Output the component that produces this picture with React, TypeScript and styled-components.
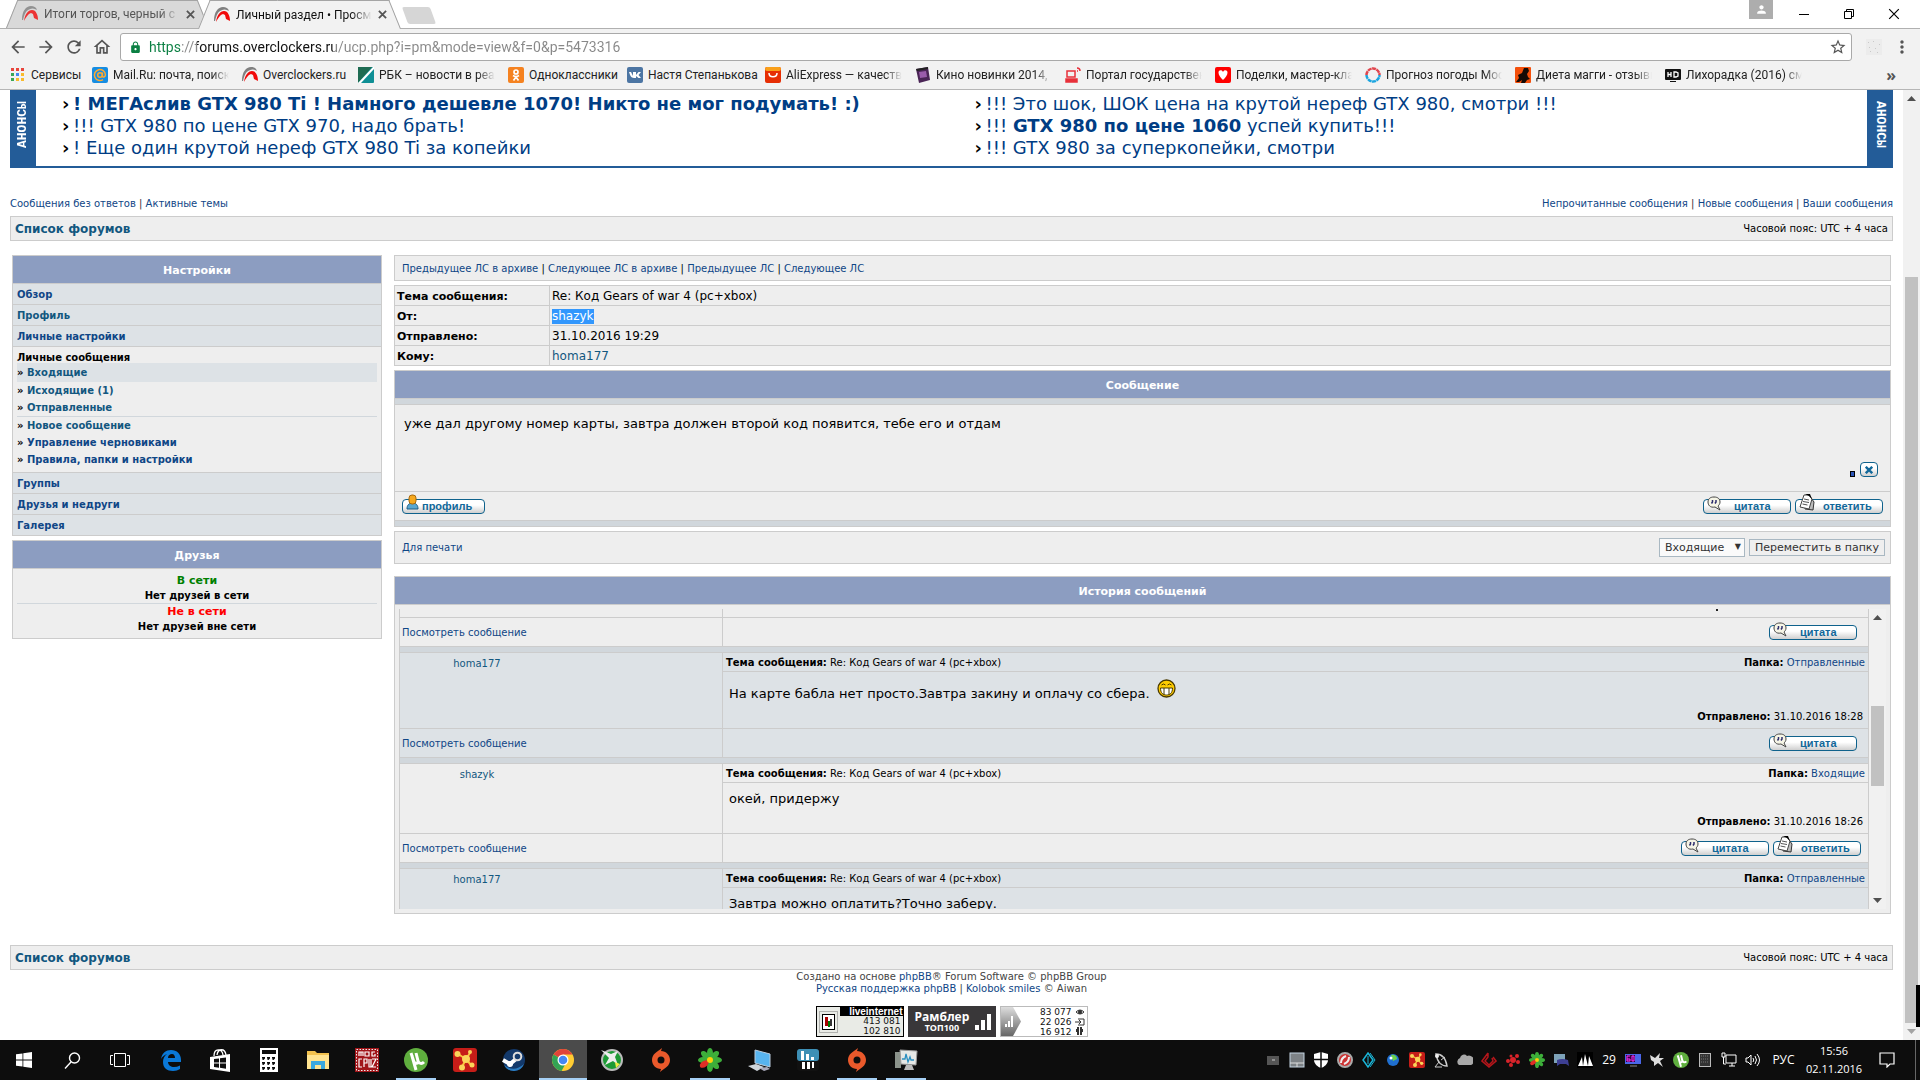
import React from "react";
import styled, { createGlobalStyle, css } from "styled-components";
import {
  MdArrowBack,
  MdArrowForward,
  MdRefresh,
  MdOutlineHome,
  MdStarBorder,
  MdMoreVert,
  MdLock,
  MdPerson,
} from "react-icons/md";

const verdana = `"DejaVu Sans", Verdana, sans-serif`;
const segoe = `"Open Sans", "Noto Sans", sans-serif`;
const chromeFont = `Roboto, "Open Sans", sans-serif`;
const line = "#cccccc";
const linkBlue = "#0f4686";
const linkTeal = "#12577f";
const row1 = "#eeeeee";
const row2 = "#dde2e6";
const spacer = "#d1d7dc";
const head = "#8c9dc1";

const GlobalStyle = createGlobalStyle`
  *, *::before, *::after { box-sizing: border-box; }
  html, body { margin: 0; background: #fff; overflow: hidden; }
  button, input, select { font: inherit; margin: 0; }
  button { cursor: pointer; }
  a { text-decoration: none; }
  svg { display: block; flex: none; }
`;

/* ---------- browser frame ---------- */

const Screen = styled.div`
  height: 100vh;
  display: flex;
  flex-direction: column;
  background: #fff;
  color: #000;
`;

const TabStrip = styled.div`
  height: 29px;
  flex: none;
  display: flex;
  padding-left: 6px;
  border-bottom: 1px solid #b0b0b0;
  font: 12px/28px ${chromeFont};
`;

const Tab = styled.button<{ $active?: boolean }>`
  position: relative;
  isolation: isolate;
  z-index: ${(p) => (p.$active ? 2 : 1)};
  width: 203px;
  height: ${(p) => (p.$active ? 29 : 28)}px;
  margin-right: -11px;
  padding: 0 14px 0 16px;
  border: 0;
  background: none;
  display: flex;
  align-items: center;
  gap: 6px;
  color: ${(p) => (p.$active ? "#111" : "#555")};
  &::before,
  &::after {
    content: "";
    position: absolute;
    z-index: -1;
    top: 0;
    bottom: 0;
    width: 55%;
    background: ${(p) => (p.$active ? "#f2f2f2" : "#d9d9d9")};
    border-top: 1px solid #a5a5a5;
  }
  &::before {
    left: 0;
    border-left: 1px solid #a0a0a0;
    transform: skewX(-22deg);
    transform-origin: bottom;
  }
  &::after {
    right: 0;
    border-right: 1px solid #a0a0a0;
    transform: skewX(22deg);
    transform-origin: bottom;
  }
`;

const fade = css`
  white-space: nowrap;
  mask-image: linear-gradient(to right, #000 85%, transparent);
`;

const TabTitle = styled.span`
  flex: 1;
  text-align: left;
  ${fade}
`;

const NewTab = styled.button`
  width: 28px;
  height: 17px;
  margin: 7px 0 0 15px;
  border: 0;
  border-radius: 2px;
  background: #d6d6d6;
  transform: skewX(20deg);
`;

const WindowButtons = styled.div`
  margin: 0 4px 0 auto;
  display: flex;
  align-items: flex-start;
`;

const UserBadge = styled.button`
  width: 24px;
  height: 19px;
  padding: 0;
  margin-right: 8px;
  border: 0;
  background: #adadad;
  color: #fff;
  display: grid;
  place-items: center;
`;

const WinButton = styled.button`
  width: 45px;
  height: 27px;
  padding: 0;
  border: 0;
  background: none;
  display: grid;
  place-items: center;
`;

const Toolbar = styled.div`
  height: 36px;
  flex: none;
  display: flex;
  align-items: center;
  padding: 0 4px;
  background: #f2f2f2;
`;

const ToolButton = styled.button`
  width: 28px;
  height: 28px;
  padding: 0;
  border: 0;
  background: none;
  color: #555;
  display: grid;
  place-items: center;
  font-size: 20px;
`;

const AddressBar = styled.label`
  flex: 1;
  min-width: 0;
  height: 28px;
  margin: 0 8px 0 4px;
  padding: 0 4px 0 8px;
  display: flex;
  align-items: center;
  gap: 7px;
  border: 1px solid #a9a9a9;
  border-radius: 3px;
  background: #fff;
  color: #0b8043;
`;

const Url = styled.input`
  flex: 1;
  min-width: 0;
  padding: 0;
  border: 0;
  outline: 0;
  font: 14px/20px ${chromeFont};
  color: #777;
  background: linear-gradient(to right, #0b8043 0 33px, #888 33px 48px, #111 48px 184px, #888 184px);
  -webkit-background-clip: text;
  background-clip: text;
  -webkit-text-fill-color: transparent;
`;

const Bookmarks = styled.nav`
  height: 25px;
  flex: none;
  display: flex;
  align-items: center;
  gap: 13px;
  padding: 0 24px 4px 10px;
  background: #f2f2f2;
  border-bottom: 1px solid #b6b6b6;
  font: 12px/20px ${chromeFont};
`;

const Bookmark = styled.a`
  display: flex;
  align-items: center;
  gap: 5px;
  color: #222;
`;

const BookmarkText = styled.span<{ $w: number; $cut?: boolean }>`
  width: ${(p) => p.$w}px;
  white-space: nowrap;
  ${(p) => p.$cut && fade}
`;

const More = styled.button`
  margin-left: auto;
  padding: 0;
  border: 0;
  background: none;
  color: #555;
  font: bold 16px/16px ${segoe};
`;

const View = styled.div`
  flex: 1;
  min-height: 0;
  display: flex;
`;

const Page = styled.main`
  flex: 1;
  min-width: 0;
  overflow: hidden;
  padding: 0 10px;
  font: 10px/12px ${verdana};
`;

const Scroll = styled.div<{ $w: number }>`
  width: ${(p) => p.$w}px;
  flex: none;
  display: flex;
  flex-direction: column;
  align-items: center;
  background: #f1f1f1;
`;

const ScrollArrow = styled.span<{ $down?: boolean; $dim?: boolean }>`
  width: 9px;
  height: 5px;
  margin: 6px 0;
  background: ${(p) => (p.$dim ? "#a3a3a3" : "#505050")};
  clip-path: ${(p) =>
    p.$down ? "polygon(0 0, 100% 0, 50% 100%)" : "polygon(50% 0, 100% 100%, 0 100%)"};
`;

const Gap = styled.span<{ $grow: number }>`
  flex: ${(p) => p.$grow} 0 0;
`;

const Thumb = styled.span<{ $grow: number }>`
  flex: ${(p) => p.$grow} 0 0;
  width: 13px;
  background: #c1c1c1;
`;

const EdgeMark = styled.span`
  position: fixed;
  right: 0;
  bottom: 53px;
  width: 4px;
  height: 42px;
  background: #000;
  z-index: 3;
`;

/* ---------- forum page ---------- */

const Announce = styled.section`
  display: flex;
  height: 78px;
  background: #fff;
`;

const AnnounceSide = styled.div<{ $flip?: boolean }>`
  width: 26px;
  flex: none;
  padding: ${(p) => (p.$flip ? "20px 0 0" : "11px 0 0")};
  background: #235c98;
  color: #fff;
  font: bold 13px/26px "Liberation Mono", monospace;
  writing-mode: vertical-rl;
  ${(p) => p.$flip && "transform: rotate(180deg);"}
`;

const AnnounceList = styled.ul`
  flex: 1;
  display: grid;
  grid-template-columns: 1fr 1fr;
  column-gap: 20px;
  align-content: start;
  margin: 0;
  padding: 3px 0 0 26px;
  border-bottom: 2px solid #235c98;
  list-style: none;
  font: 18px/22px ${verdana};
`;

const AnnounceItem = styled.li`
  display: flex;
  gap: 3px;
  white-space: nowrap;
  &::before {
    content: "›";
    width: 8px;
    font-weight: bold;
  }
  a {
    color: #003d84;
  }
`;

const QuickLinks = styled.div`
  display: flex;
  justify-content: space-between;
  padding: 30px 0 6px;
  color: #333;
`;

const A = styled.a<{ $teal?: boolean }>`
  color: ${(p) => (p.$teal ? linkTeal : linkBlue)};
`;

const Crumbs = styled.div`
  height: 25px;
  padding: 0 4px;
  display: flex;
  align-items: center;
  justify-content: space-between;
  border: 1px solid ${line};
  background: ${row1};
  strong {
    font-size: 12px;
  }
`;

const Columns = styled.div`
  display: grid;
  grid-template-columns: 370px minmax(0, 1fr);
  align-items: start;
  gap: 12px;
  margin: 14px 2px 31px;
`;

const Stack = styled.div`
  display: flex;
  flex-direction: column;
  gap: 4px;
`;

const Panel = styled.section`
  border: 1px solid ${line};
  background: ${row1};
`;

const PanelHead = styled.h2`
  margin: 0;
  padding-top: 2px;
  border-bottom: 1px solid ${line};
  background: ${head};
  color: #fff;
  text-align: center;
  font-size: 11px;
  line-height: 25px;
`;

const MenuList = styled.ul`
  margin: 0;
  padding: 0;
  list-style: none;
  font-weight: bold;
`;

const MenuItem = styled.li<{ $open?: boolean }>`
  padding: ${(p) => (p.$open ? "0 4px" : "2px 4px 0")};
  line-height: 18px;
  background: ${(p) => (p.$open ? row1 : row2)};
  & + & {
    border-top: 1px solid ${line};
  }
`;

const SubList = styled.ul`
  margin: 0;
  padding: 0 0 4px;
  list-style: none;
`;

const SubItem = styled.li<{ $current?: boolean; $rule?: boolean }>`
  line-height: 17px;
  ${(p) => p.$current && `background: ${row2}; line-height: 19px;`}
  ${(p) => p.$rule && `border-bottom: 1px solid ${spacer};`}
`;

const OpenTitle = styled.div`
  padding-top: 5px;
  line-height: 11px;
`;

const FriendsBody = styled.div`
  padding: 4px;
  text-align: center;
  font-weight: bold;
`;

const Status = styled.div<{ $color: string }>`
  font-size: 11px;
  line-height: 15px;
  color: ${(p) => p.$color};
`;

const StatusNote = styled.div<{ $rule?: boolean }>`
  line-height: 15px;
  ${(p) => p.$rule && `border-bottom: 1px solid ${spacer};`}
`;

const NavBox = styled(Panel)`
  padding: 2px 7px 0;
  line-height: 22px;
`;

const Details = styled.table`
  width: 100%;
  border-collapse: collapse;
  background: ${row1};
  th,
  td {
    height: 20px;
    padding: 2px 2px 0;
    border: 1px solid ${line};
    text-align: left;
    font-size: 12px;
    line-height: 15px;
  }
  th {
    width: 155px;
    font-size: 11px;
  }
`;

const Selected = styled.a`
  display: inline-block;
  background: #3297fd;
  color: #fff;
`;

const Strip = styled.div`
  height: 5px;
  background: ${spacer};
`;

const MessageEnd = styled(Strip)`
  height: 6px;
  border-top: 1px solid ${line};
`;

const MessageBody = styled.div`
  height: 88px;
  padding: 10px 12px 14px 9px;
  border: solid ${line};
  border-width: 1px 0;
  display: flex;
  flex-direction: column;
  justify-content: space-between;
  font-size: 13px;
  line-height: 18px;
`;

const PostTools = styled.div`
  display: flex;
  justify-content: flex-end;
  align-items: flex-end;
  gap: 5px;
`;

const Dot = styled.span`
  width: 5px;
  height: 6px;
  border: 1px solid #000;
  background: #2b55b8;
`;

const buttonSkin = css`
  padding: 0;
  border: 1px solid #0f628c;
  border-radius: 4px;
  background: linear-gradient(#fff 40%, #cfcfcf);
  color: #11689a;
`;

const CloseButton = styled.button`
  ${buttonSkin}
  width: 18px;
  height: 15px;
  display: grid;
  place-items: center;
`;

const ImageButton = styled.button<{ $w: number; $pad: number }>`
  ${buttonSkin}
  position: relative;
  width: ${(p) => p.$w}px;
  height: 15px;
  padding-left: ${(p) => p.$pad}px;
  text-align: left;
  font: bold 11px/12px "Liberation Sans", Arial, sans-serif;
  svg {
    position: absolute;
    left: 3px;
    bottom: 2px;
  }
`;

const ButtonRow = styled.div`
  height: 28px;
  display: flex;
  align-items: center;
  justify-content: space-between;
  padding: 0 7px;
`;

const ButtonGroup = styled.div`
  display: flex;
  gap: 4px;
`;

const PrintBox = styled(Panel)`
  height: 33px;
  margin-bottom: 8px;
  padding: 0 5px 0 7px;
  display: flex;
  align-items: center;
  justify-content: space-between;
`;

const MoveForm = styled.form`
  display: flex;
  align-items: center;
  gap: 4px;
  font-size: 11px;
`;

const FolderSelect = styled.label`
  position: relative;
  &::after {
    content: "▼";
    position: absolute;
    right: 4px;
    top: 4px;
    font-size: 8px;
    line-height: 9px;
    color: #333;
    pointer-events: none;
  }
  select {
    appearance: none;
    width: 86px;
    height: 19px;
    padding: 0 5px;
    border: 1px solid #a9b8c2;
    border-radius: 0;
    background: #fafafa;
    color: #333;
  }
`;

const MoveButton = styled.button`
  height: 17px;
  padding: 0 5px;
  border: 1px solid #a9b8c2;
  background: #efefef;
  color: #333;
  line-height: 15px;
`;

const HistoryBox = styled.div`
  height: 308px;
  padding: 4px;
  display: flex;
`;

const HistoryView = styled.div`
  flex: 1;
  min-width: 0;
  overflow: hidden;
`;

const History = styled.table`
  width: 100%;
  border-spacing: 0;
  border-left: 1px solid ${line};
  table-layout: fixed;
  td {
    padding: 0;
    border: solid ${line};
    border-width: 0 1px 1px 0;
    vertical-align: top;
  }
`;

const NameCol = styled.col`
  width: 323px;
`;

const HistoryRow = styled.tr<{ $alt?: boolean }>`
  background: ${(p) => (p.$alt ? row2 : row1)};
`;

const Tail = styled.div`
  height: 8px;
  display: flex;
  justify-content: flex-end;
  padding-right: 150px;
`;

const Speck = styled.span`
  width: 2px;
  height: 2px;
  background: #222;
`;

const User = styled.div`
  width: 154px;
  padding-top: 5px;
  text-align: center;
`;

const Subject = styled.div`
  display: flex;
  justify-content: space-between;
  padding: 2px 3px 0;
  line-height: 16px;
  border-bottom: 1px solid ${line};
`;

const HistoryText = styled.div`
  padding: 5px 6px 3px;
  font-size: 13px;
  line-height: 22px;
`;

const SmileText = styled.div`
  display: flex;
  align-items: flex-start;
  gap: 7px;
  padding: 7px 6px 0;
  font-size: 13px;
  line-height: 29px;
`;

const Sent = styled.div`
  padding: 3px 5px 5px;
  text-align: right;
`;

const FootLink = styled.div`
  padding: 2px 0 0 2px;
  line-height: 26px;
`;

const HistoryButtons = styled.div<{ $pad: number }>`
  height: 28px;
  display: flex;
  align-items: center;
  justify-content: flex-end;
  gap: 4px;
  padding-right: ${(p) => p.$pad}px;
`;

const Credits = styled.footer`
  padding-top: 1px;
  text-align: center;
  color: #444;
`;

const Counters = styled.div`
  display: flex;
  justify-content: center;
  gap: 4px;
  padding-top: 11px;
`;

const Counter = styled.a<{ $kind: "live" | "rambler" | "stat" }>`
  width: 88px;
  height: 31px;
  display: flex;
  align-items: center;
  color: #111;
  ${(p) => p.$kind === "live" && "border: 1px solid #000; background: #e9ebe6;"}
  ${(p) =>
    p.$kind === "rambler" &&
    "background: #393739; color: #fff; padding: 0 5px 0 7px; justify-content: space-between;"}
  ${(p) => p.$kind === "stat" && "border: 1px solid #bbb; background: #fff;"}
`;

const LiveText = styled.span`
  flex: 1;
  align-self: stretch;
  display: flex;
  flex-direction: column;
  text-align: right;
  font: 9px/10px ${verdana};
  b {
    background: #000;
    color: #fff;
    font: bold 10px/9px "Liberation Sans", sans-serif;
  }
`;

const LiveNumber = styled.span`
  padding-right: 2px;
`;

const RamblerText = styled.span`
  font: bold 12px/12px ${segoe};
  small {
    display: block;
    font-size: 9px;
    line-height: 10px;
  }
`;

const StatText = styled.span`
  flex: 1;
  text-align: right;
  padding-right: 3px;
  font: 9px/10px ${verdana};
`;

/* ---------- task bar ---------- */

const TaskBar = styled.footer`
  height: 40px;
  flex: none;
  display: flex;
  background: #0d0d0d;
  color: #fff;
  font: 12px/18px ${segoe};
`;

const TaskGroup = styled.div<{ $apps?: boolean }>`
  display: flex;
  ${(p) => p.$apps && "gap: 1px; margin-left: 3px;"}
`;

const TaskButton = styled.button<{ $state?: "running" | "active" }>`
  width: 48px;
  height: 40px;
  padding: 0;
  border: 0;
  color: #fff;
  display: grid;
  place-items: center;
  background: ${(p) =>
    p.$state === "active"
      ? "linear-gradient(#4b4b4b 0 38px, #a6d0f5 38px)"
      : p.$state === "running"
        ? "linear-gradient(#a6d0f5, #a6d0f5) center bottom / 40px 2px no-repeat"
        : "none"};
`;

const Tray = styled.div`
  display: flex;
  align-items: center;
  margin-left: auto;
`;

const TrayItem = styled.button`
  width: 24px;
  height: 40px;
  padding: 0;
  border: 0;
  background: none;
  color: #fff;
  display: grid;
  place-items: center;
`;

const Lang = styled.button`
  width: 37px;
  padding: 0;
  border: 0;
  background: none;
  color: #fff;
`;

const Clock = styled.time`
  width: 64px;
  text-align: center;
  font-size: 11px;
`;

const NoteButton = styled(TrayItem)`
  width: 42px;
`;

const ShowDesktop = styled.button`
  width: 5px;
  height: 40px;
  margin-left: 7px;
  padding: 0;
  border: 0;
  border-left: 1px solid #666;
  background: none;
`;

/* ---------- drawings ---------- */

const OcIcon = ({ dim }: { dim?: boolean }) => (
  <svg width="16" height="16" viewBox="0 0 16 16" opacity={dim ? 0.8 : 1}>
    <path d="M0 14C0 5 4 0 9 0c3 0 5 1 6 4C12 2 9 2 6 4 3 6 2 10 1 14z" fill="#808080" />
    <path d="M2 15C3 8 6 4 10 4c4 0 6 5 6 10l-4-2-1-4-2-1c-3 1-5 4-7 8z" fill="#f10a0a" />
  </svg>
);

const CloseX = ({ size = 9, color = "#555", w = 2 }: { size?: number; color?: string; w?: number }) => (
  <svg width={size} height={size} viewBox="0 0 10 10" stroke={color} strokeWidth={w}>
    <path d="M1 1l8 8M9 1L1 9" />
  </svg>
);

const Sq = ({ bg, children, r = 1 }: { bg: string; children?: React.ReactNode; r?: number }) => (
  <svg width="16" height="16" viewBox="0 0 16 16">
    <rect width="16" height="16" rx={r} fill={bg} />
    {children}
  </svg>
);

const AppsIcon = () => (
  <svg width="16" height="16" viewBox="0 0 16 16">
    {["#e8453c", "#e8453c", "#e8453c", "#3aa757", "#4688f1", "#f9bb2d", "#3aa757", "#f9bb2d", "#f9bb2d"].map((c, i) => (
      <rect key={i} x={1 + (i % 3) * 5} y={1 + Math.floor(i / 3) * 5} width="3" height="3" fill={c} />
    ))}
  </svg>
);

const MailIcon = () => (
  <Sq bg="#168de2" r={2}>
    <g fill="none" stroke="#ffa930" strokeWidth="1.5">
      <circle cx="8" cy="8" r="2.3" />
      <path d="M10.4 5.6v3.2c0 2 3 1.500 3-1A5.500 5.500 0 1 0 11 12.600" />
    </g>
  </Sq>
);

const RbkIcon = () => (
  <Sq bg="#0f8f95">
    <path d="M0 16V0h14z" fill="#1e6b52" />
    <path d="M0 16L15 0h1v2L3 16z" fill="#fff" />
  </Sq>
);

const OkIcon = () => (
  <Sq bg="#f58220" r={2}>
    <g fill="none" stroke="#fff" strokeWidth="1.700">
      <circle cx="8" cy="5" r="2" />
      <path d="M5 8.500q3 2 6 0M8 10l-2.500 3.500M8 10l2.500 3.500" />
    </g>
  </Sq>
);

const VkIcon = () => (
  <Sq bg="#4c75a3" r={2}>
    <path d="M2 5h2l2 4V5h3v3l2.500-3H14l-2.500 3 2.500 3h-2.500L9 9v2H7C4 11 3 8 2 5z" fill="#fff" />
  </Sq>
);

const AliIcon = () => (
  <Sq bg="#e62e04" r={2}>
    <rect width="16" height="4" rx="2" fill="#f9a01b" />
    <path d="M4 6c0 5 8 5 8 0" fill="none" stroke="#fff" strokeWidth="1.500" />
  </Sq>
);

const FilmIcon = () => (
  <svg width="16" height="16" viewBox="0 0 16 16">
    <path d="M1 2l12-2 2 13-11 3z" fill="#4a2556" />
    <path d="M4 5l7-1 1 6-7 1z" fill="#9a5cab" />
    <path d="M1 2l12-2v2L2 4z" fill="#222" />
  </svg>
);

const PortalIcon = () => (
  <svg width="16" height="16" viewBox="0 0 16 16" fill="none" stroke="#e8303a" strokeWidth="1.500">
    <rect x="2" y="4" width="8" height="6" />
    <path d="M1 12h11v3H1z" fill="#e8303a" />
    <path d="M12 1q3 0 3 3M12 4h1" />
  </svg>
);

const HeartIcon = () => (
  <Sq bg="#f00" r={2}>
    <path d="M8 13C5 10 3.500 8 3.500 5.500S7 2.500 8 5c1-2.500 4.500-2 4.500.5S11 10 8 13z" fill="#fff" />
  </Sq>
);

const RingIcon = () => (
  <svg width="16" height="16" viewBox="0 0 16 16" fill="none" strokeWidth="2.500">
    <path d="M1.500 8a6.500 6.500 0 0 1 13 0" stroke="#e0454d" strokeDasharray="4 .5" />
    <path d="M1.500 8a6.500 6.500 0 0 0 13 0" stroke="#1ba5e0" strokeDasharray="4 .5" />
  </svg>
);

const DietIcon = () => (
  <Sq bg="#f4500c">
    <path d="M9 1l4 0 1 3-2 3 1 3 2 2-3 1-2 3H6l1-3-3 2H1l3-4-1-3 4-2z" fill="#150a05" />
  </Sq>
);

const HdIcon = () => (
  <svg width="16" height="16" viewBox="0 0 16 16">
    <rect y="2" width="16" height="11" rx="1" fill="#111" />
    <path d="M5 14h6v1H5z" fill="#111" />
    <path d="M3 5v5M6 5v5M3 7.500h3M9 5v5h2l2-1V6l-2-1z" stroke="#fff" fill="none" strokeWidth="1.300" />
  </svg>
);

const QuoteIcon = () => (
  <svg width="16" height="15" viewBox="0 0 16 15">
    <path d="M7 1c4 0 6 2 6 5 0 2-1 3-2 4l2 4-5-3C3 12 1 9 1 6s2-5 6-5z" fill="#f6f5e6" stroke="#444" />
    <path d="M5.500 4v2l-1 1.500M9 4v2L8 7.500" stroke="#2d2d6d" strokeWidth="1.500" fill="none" />
  </svg>
);

const ReplyIcon = () => (
  <svg width="16" height="17" viewBox="0 0 16 17">
    <path d="M8 3l4 1 3 4-1 8-8-1z" fill="#bbb" stroke="#333" />
    <path d="M5 1h5l3 4-3 10-9-2z" fill="#fff" stroke="#444" />
    <path d="M6 0h5l2 5-3-3z" fill="#000" />
    <path d="M5 5l5 1M4 7.500l6 1M3.500 10l5 1" stroke="#555" />
  </svg>
);

const ProfileIcon = () => (
  <svg width="13" height="17" viewBox="0 0 13 17">
    <path d="M1 15c0-4 2-6 5.500-6S12 11 12 15z" fill="#5aa7d0" stroke="#1d5c85" />
    <rect x="3" y="1" width="7" height="9" rx="3" fill="#f6a91f" stroke="#a86a0d" />
  </svg>
);

const SmileIcon = () => (
  <svg width="19" height="19" viewBox="0 0 19 19">
    <circle cx="9.500" cy="9.500" r="8.500" fill="#fc0" stroke="#4a3a00" strokeWidth="1.300" />
    <path d="M3.500 9h12c0 5-2.500 7-6 7s-6-2-6-7z" fill="#fff" stroke="#4a3a00" />
    <path d="M7 9v6.500M12 9v6.500" stroke="#4a3a00" />
    <path d="M4.500 6q2-2 4 0M10.500 6q2-2 4 0" fill="none" stroke="#4a3a00" />
  </svg>
);

const LiveIcon = () => (
  <svg width="23" height="29" viewBox="0 0 23 29">
    <rect x="2.500" y="4.500" width="18" height="21" fill="none" stroke="#777" strokeDasharray="1 1" />
    <rect x="5.500" y="7.500" width="12" height="15" fill="#fff" stroke="#000" />
    <path d="M8 10h3v9H8z" fill="#a00" />
    <path d="M11 14h2v6h-2z" fill="#070" />
    <path d="M13 12h2v7h-2z" fill="#333" />
  </svg>
);

const BarsIcon = () => (
  <svg width="16" height="16" viewBox="0 0 16 16" fill="#fff">
    <path d="M0 11h4v5H0zM6 6h4v10H6zM12 0h4v16h-4z" />
  </svg>
);

const StatArrow = () => (
  <svg width="20" height="29" viewBox="0 0 20 29">
    <defs>
      <linearGradient id="sg" x2="0" y2="1">
        <stop stopColor="#ddd" />
        <stop offset="1" stopColor="#666" />
      </linearGradient>
    </defs>
    <path d="M0 0h12l8 14.500L12 29H0z" fill="url(#sg)" />
    <path d="M4 17h2v3H4zM7 14h2v6H7zM10 9h2v11h-2z" fill="#fff" />
  </svg>
);

const StatIcons = () => (
  <svg width="12" height="29" viewBox="0 0 12 29" fill="none" stroke="#333">
    <path d="M1 5q4-4 8 0-4 4-8 0z" />
    <circle cx="5" cy="5" r="1.500" fill="#333" />
    <path d="M3 12h6v6H3M0 15h6M4 13l2 2-2 2" />
    <path d="M3 20v8M6 20v8M2 22v3M7 22v3" strokeWidth="2" />
  </svg>
);

const I = ({ children, s = 24, v = 24 }: { children: React.ReactNode; s?: number; v?: number }) => (
  <svg width={s} height={s} viewBox={`0 0 ${v} ${v}`}>
    {children}
  </svg>
);

const WindowsIcon = () => (
  <I s={16} v={16}>
    <path d="M0 2.300L6.500 1.400V7.600H0zM7.300 1.300L16 0v7.600H7.300zM0 8.400h6.500v6.200L0 13.700zM7.300 8.400H16V16l-8.700-1.300z" fill="#fff" />
  </I>
);
const SearchIcon = () => (
  <I s={17} v={17}>
    <g fill="none" stroke="#fff" strokeWidth="1.400">
      <circle cx="10.500" cy="6" r="5" />
      <path d="M7 10l-6 6.500" />
    </g>
  </I>
);
const TaskViewIcon = () => (
  <I s={20} v={20}>
    <path d="M4.500 3.500h11v13h-11zM3 5.500H.5v9H3M17 5.500h2.500v9H17" fill="none" stroke="#fff" />
  </I>
);
const EdgeIcon = () => (
  <I s={22} v={22}>
    <path d="M1 10C2 4 6 1 11 1c6 0 10 4 10 10v2H8c0 3 3 5 6 5 2 0 4-.5 6-1.500V20c-2 1-4 2-7 2-6 0-10-3-10-9 0-3 1-6 4-8-3 1-5 3-6 5zm7-1h7c0-2-1-4-3-4S8 6 8 9z" fill="#0a78d7" />
  </I>
);
const StoreIcon = () => (
  <I>
    <path d="M2 9l20-3v18L2 21z" fill="#fff" />
    <path d="M6 8c0-8 8-8 9-1M9 7c1-7 8-7 9 0" fill="none" stroke="#fff" strokeWidth="1.300" />
    <path d="M6 11l5-.6v4.200H6zM12 10.300l6-.8v5.100h-6zM6 15.500h5v4.200l-5-.6zM12 15.500h6v5.200l-6-.9z" fill="#0d0d0d" />
  </I>
);
const CalcIcon = () => (
  <I>
    <rect x="3" width="18" height="24" fill="#fff" />
    <rect x="5" y="2" width="14" height="4" fill="#0d0d0d" />
    {[9, 14, 19].map((y) => [5, 10, 15].map((x) => <path key={`${x}${y}`} d={`M${x} ${y}h3v1.500l-1.500 1.500h-1v-1.500H${x}z`} fill="#0d0d0d" />))}
  </I>
);
const FolderIcon = () => (
  <I>
    <path d="M1 3h8l2 2h12v16H1z" fill="#f2c14e" />
    <path d="M1 7h22v14H1z" fill="#ffe390" />
    <path d="M5 21v-8h14v8h-4v-4H9v4z" fill="#3aa8df" />
  </I>
);
const CpuIcon = () => (
  <I>
    <rect width="24" height="24" fill="#a11519" />
    <rect x="1.500" y="1.500" width="21" height="21" fill="none" stroke="#eee" strokeDasharray="1.500 1.500" />
    <path d="M4 8V4h4v4M6 4v4M10 4h4v4h-4zM20 4h-3v4h3V6M7 11H4v8h3M9 19v-8h3v4H9M14 11v8h2v-8M17 11h4l-4 8h4" fill="none" stroke="#fff" strokeWidth="1.200" />
  </I>
);
const UTorrent = ({ s = 24 }: { s?: number }) => (
  <I s={s}>
    <circle cx="12" cy="12" r="12" fill="#5fae3e" />
    <path d="M7 5l3 9c1 2 4 2 4-1l-2-8M14 13c1 3 4 3 6 1M8 8l4 14" fill="none" stroke="#fff" strokeWidth="3" />
  </I>
);
const NodesIcon = ({ s = 24 }: { s?: number }) => (
  <I s={s}>
    <rect width="24" height="24" rx="3" fill="#c61d18" />
    <path d="M13 11L5 6M13 11l4-6M13 11l5 6M13 11l-4 8" stroke="#f8c33a" strokeWidth="2" />
    <g fill="#fbd45a">
      <circle cx="13" cy="11" r="4" />
      <circle cx="4.500" cy="6" r="3" />
      <circle cx="17" cy="4" r="2" />
      <circle cx="19" cy="17" r="2.500" />
      <circle cx="9" cy="19.500" r="3" />
    </g>
  </I>
);
const SteamIcon = () => (
  <I>
    <circle cx="12" cy="12" r="11" fill="#13396b" />
    <path d="M2 17q10 8 20-1a11 11 0 0 1-20 1z" fill="#2b7cc0" />
    <path d="M1 12l7 4 6-5" fill="none" stroke="#fff" strokeWidth="4" />
    <circle cx="15.500" cy="8.500" r="3.800" fill="#13396b" stroke="#ddd" strokeWidth="2" />
    <circle cx="8" cy="16" r="3" fill="#fff" />
  </I>
);
const ChromeIcon = () => (
  <I>
    <circle cx="12" cy="12" r="11" fill="#fc3" />
    <path d="M12 12L2.500 6.500A11 11 0 0 1 21.500 6.500H12z" fill="#e0443a" />
    <path d="M2.500 6.500a11 11 0 0 0 8 16.400L15 15l-3-3z" fill="#33a354" />
    <circle cx="12" cy="12" r="5.500" fill="#fff" />
    <circle cx="12" cy="12" r="4.300" fill="#4587f3" />
  </I>
);
const BurnIcon = () => (
  <I>
    <circle cx="12" cy="12" r="10" fill="#1d9a35" stroke="#bbb" strokeWidth="2" />
    <path d="M1 2l10 4 7-3-3 6 3 8-5-4-8 4 4-7z" fill="#eee" />
    <path d="M15 14l5 2-4 4z" fill="#ee4" />
  </I>
);
const OriginIcon = () => (
  <I>
    <path d="M12 3c5 0 9 4 9 9 0 6-5 8-10 12l1-3c-5 0-9-4-9-9C3 6 8 4 13 0z" fill="#e9592b" />
    <circle cx="12" cy="12" r="3.500" fill="#0d0d0d" />
  </I>
);
const IcqIcon = ({ s = 24 }: { s?: number }) => (
  <I s={s}>
    {[0, 45, 90, 135, 180, 270, 315].map((a) => (
      <ellipse key={a} cx="12" cy="5" rx="3" ry="5" fill="#3dae3a" transform={`rotate(${a} 12 12)`} />
    ))}
    <ellipse cx="12" cy="5" rx="3" ry="5" fill="#e02e26" transform="rotate(235 12 12)" />
    <circle cx="12" cy="12" r="3" fill="#fcd20a" />
  </I>
);
const LaptopIcon = () => (
  <I>
    <path d="M8 2l15 4v13L8 15z" fill="#58b4ef" stroke="#bcd" />
    <path d="M1 18l8-2 8 3-7 4z" fill="#cfd6dc" />
    <path d="M12 20l8-1 3 2-6 2z" fill="#aab" />
  </I>
);
const GaugeIcon = () => (
  <I>
    <rect x="1" y="1" width="22" height="22" rx="3" fill="#111" />
    <rect x="1" y="1" width="22" height="12" rx="3" fill="#3d8fb5" />
    <path d="M5 3h3v9H5zM10 6h3v6h-3zM15 9h3v3h-3zM6 14h3v7H6zM11 14h3v7h-3zM16 14h2v6h-2z" fill="#fff" />
  </I>
);
const MonitorIcon = () => (
  <I>
    <path d="M1 4h6v16H1z" fill="#8b938b" />
    <path d="M6 2l17 1-1 14-15-1z" fill="#e6e8e6" stroke="#999" />
    <path d="M8 11h3l1-5 2 8 2-5 1 3h3" fill="none" stroke="#2b8fc0" strokeWidth="1.300" />
    <path d="M12 17h6l2 5H10z" fill="#bbb" />
  </I>
);

const apps: { name: string; icon: React.ReactNode; state?: "running" | "active" }[] = [
  { name: "Edge", icon: <EdgeIcon /> },
  { name: "Store", icon: <StoreIcon /> },
  { name: "Calculator", icon: <CalcIcon /> },
  { name: "Explorer", icon: <FolderIcon /> },
  { name: "CPU-Z", icon: <CpuIcon /> },
  { name: "uTorrent", icon: <UTorrent />, state: "running" },
  { name: "Nodes", icon: <NodesIcon /> },
  { name: "Steam", icon: <SteamIcon /> },
  { name: "Chrome", icon: <ChromeIcon />, state: "active" },
  { name: "Afterburner", icon: <BurnIcon /> },
  { name: "Origin", icon: <OriginIcon /> },
  { name: "ICQ", icon: <IcqIcon />, state: "running" },
  { name: "Remote", icon: <LaptopIcon /> },
  { name: "Gauge", icon: <GaugeIcon /> },
  { name: "Origin client", icon: <OriginIcon />, state: "running" },
  { name: "Monitor", icon: <MonitorIcon />, state: "running" },
];

const T = ({ children }: { children: React.ReactNode }) => <I s={16} v={16}>{children}</I>;

const tray: React.ReactNode[] = [
  <T><rect x="2" y="4" width="12" height="9" fill="#555" /><path d="M7 8h3" stroke="#ccc" /></T>,
  <T><rect x="1" y="1" width="14" height="14" fill="#7d8286" stroke="#c4d4e2" /><path d="M1 11h14M8 11v4" stroke="#ddd" /></T>,
  <T><path d="M8 0l7 2v6c0 4-4 7-7 8-3-1-7-4-7-8V2z" fill="#fff" /><path d="M8 0v16M1 7.500h14" stroke="#0d0d0d" strokeWidth="1.500" /></T>,
  <T><circle cx="8" cy="8" r="7" fill="#c33" stroke="#aaa" strokeWidth="2" /><path d="M4 11q0-5 5-7M7 12q5-2 5-7" stroke="#eee" strokeWidth="2" fill="none" /></T>,
  <T><path d="M7 1l5 7-5 7-5-7z" fill="none" stroke="#1bb6d8" strokeWidth="1.500" /><path d="M9 1l5 7-5 7M7 4v8" stroke="#1bb6d8" fill="none" /></T>,
  <T><circle cx="8" cy="8" r="6" fill="#1f6fd0" /><path d="M6 3c4-1 6 2 6 4L8 9z" fill="#6bd04a" /><circle cx="6" cy="6" r="1.500" fill="#fff" /></T>,
  <NodesIcon s={16} />,
  <T><path d="M3 2q9 0 11 12-9 0-11-12z" fill="none" stroke="#ccc" strokeWidth="1.500" /><path d="M6 10l-4 5h7M8 8l4-3" stroke="#ccc" fill="none" /><circle cx="4" cy="4" r="2" fill="#eee" /></T>,
  <T><path d="M2 13a4 4 0 0 1 1-7 4 4 0 0 1 7-2 4 4 0 0 1 4 9z" fill="#a9a9a9" /></T>,
  <T><path d="M7 1v4L4 9l4 4 4-4-1-3M7 1L1 9l7 6 7-6-3-4" fill="none" stroke="#b5161b" strokeWidth="1.500" /></T>,
  <T><g fill="#d8232a"><circle cx="8" cy="8" r="3" /><circle cx="3" cy="9" r="2" /><circle cx="12" cy="4" r="2" /><circle cx="13" cy="10" r="2" /><circle cx="6" cy="13" r="2" /><circle cx="6" cy="4" r="1.500" /></g></T>,
  <IcqIcon s={16} />,
  <T><path d="M1 2h11v9H1z" fill="#7da2b8" /><path d="M4 8q5-2 11 0l1 6-3-2H7l-3 2z" fill="#3d3f93" /></T>,
  <T><rect width="16" height="16" fill="#000" /><path d="M1 14L5 5l1 9zM6 14L8 2l3 12zM11 14L12 4l4 10z" fill="#fff" /></T>,
  "29",
  <T><rect x="0" y="2" width="16" height="10" fill="#4a66e8" /><rect x="1" y="3" width="9" height="7" fill="#3a0040" /><path d="M2 4h3M2 4v5h3V7H2M7 4h2v5H7z" stroke="#f3f" fill="none" /><path d="M5 14h7" stroke="#888" /></T>,
  <T><path d="M1 3l5 3 5-5-1 5 5 0-4 3 3 6-5-4-4 3 0-4L2 8z" fill="#ddd" /></T>,
  <UTorrent s={16} />,
  <T><rect x="2.500" y="1.500" width="11" height="13" fill="#333" stroke="#bbb" /><path d="M4 4h8M4 7h8M4 10h8" stroke="#777" strokeDasharray="1 1" /></T>,
  <T><path d="M5 3h10v8H5zM8 14h6M11 11v3M1 1h3v4H1zM2.500 5v7H5" fill="none" stroke="#fff" /></T>,
  <T><path d="M1 6h2l3-3v10l-3-3H1z" fill="none" stroke="#fff" /><path d="M8 6q1.500 2 0 4M10 4q3 4 0 8M12 2q5 6 0 12" fill="none" stroke="#fff" /></T>,
];

const bookmarks: { t: string; w: number; cut?: boolean; icon: React.ReactNode }[] = [
  { t: "Сервисы", w: 48, icon: <AppsIcon /> },
  { t: "Mail.Ru: почта, поиск", w: 116, cut: true, icon: <MailIcon /> },
  { t: "Overclockers.ru", w: 82, icon: <OcIcon /> },
  { t: "РБК – новости в реал", w: 116, cut: true, icon: <RbkIcon /> },
  { t: "Одноклассники", w: 85, icon: <OkIcon /> },
  { t: "Настя Степанькова", w: 104, icon: <VkIcon /> },
  { t: "AliExpress — качестве", w: 116, cut: true, icon: <AliIcon /> },
  { t: "Кино новинки 2014,", w: 116, cut: true, icon: <FilmIcon /> },
  { t: "Портал государствен", w: 116, cut: true, icon: <PortalIcon /> },
  { t: "Поделки, мастер-кла", w: 116, cut: true, icon: <HeartIcon /> },
  { t: "Прогноз погоды Мос", w: 116, cut: true, icon: <RingIcon /> },
  { t: "Диета магги - отзывь", w: 116, cut: true, icon: <DietIcon /> },
  { t: "Лихорадка (2016) смо", w: 116, cut: true, icon: <HdIcon /> },
];

const Quote = () => (
  <ImageButton type="button" $w={88} $pad={30}>
    <QuoteIcon />
    цитата
  </ImageButton>
);

const Reply = () => (
  <ImageButton type="button" $w={88} $pad={27}>
    <ReplyIcon />
    ответить
  </ImageButton>
);

const FootRow = ({ alt, reply }: { alt?: boolean; reply?: boolean }) => (
  <>
    <HistoryRow $alt={alt}>
      <td>
        <FootLink>
          <A href="#">Посмотреть сообщение</A>
        </FootLink>
      </td>
      <td>
        <HistoryButtons $pad={reply ? 7 : 11}>
          <Quote />
          {reply && <Reply />}
        </HistoryButtons>
      </td>
    </HistoryRow>
    <tr>
      <td colSpan={2}>
        <Strip />
      </td>
    </tr>
  </>
);

const PostRow = (p: { alt?: boolean; user: string; folder: string; text: string; smile?: boolean; sent?: string }) => (
  <HistoryRow $alt={p.alt}>
    <td>
      <User>
        <A $teal href="#">
          {p.user}
        </A>
      </User>
    </td>
    <td>
      <Subject>
        <span>
          <b>Тема сообщения:</b> Re: Код Gears of war 4 (pc+xbox)
        </span>
        <span>
          <b>Папка:</b> <A href="#">{p.folder}</A>
        </span>
      </Subject>
      {p.smile ? (
        <SmileText>
          {p.text}
          <SmileIcon />
        </SmileText>
      ) : (
        <HistoryText>{p.text}</HistoryText>
      )}
      {p.sent && (
        <Sent>
          <b>Отправлено:</b> {p.sent}
        </Sent>
      )}
    </td>
  </HistoryRow>
);

const CrumbBar = () => (
  <Crumbs>
    <strong>
      <A $teal href="#">
        Список форумов
      </A>
    </strong>
    <span>Часовой пояс: UTC + 4 часа</span>
  </Crumbs>
);

const PageScroll = () => (
  <Scroll $w={17} aria-hidden>
    <ScrollArrow />
    <Gap $grow={170} />
    <Thumb $grow={746} />
    <ScrollArrow $down $dim />
  </Scroll>
);

export default function App() {
  return (
    <Screen>
      <GlobalStyle />
      <TabStrip>
        <Tab type="button">
          <OcIcon dim />
          <TabTitle>Итоги торгов, черный с</TabTitle>
          <CloseX />
        </Tab>
        <Tab type="button" $active>
          <OcIcon />
          <TabTitle>Личный раздел • Просм</TabTitle>
          <CloseX />
        </Tab>
        <NewTab type="button" aria-label="Новая вкладка" />
        <WindowButtons>
          <UserBadge type="button" aria-label="Пользователь">
            <MdPerson size={13} />
          </UserBadge>
          <WinButton type="button" aria-label="Свернуть">
            <svg width="10" height="10" stroke="#000"><path d="M0 5.500h10" /></svg>
          </WinButton>
          <WinButton type="button" aria-label="Восстановить">
            <svg width="10" height="10" stroke="#000" fill="none"><path d="M.5 2.500h7v7h-7zM2.500 2.500v-2h7v7h-2" /></svg>
          </WinButton>
          <WinButton type="button" aria-label="Закрыть">
            <CloseX size={12} color="#000" w={1} />
          </WinButton>
        </WindowButtons>
      </TabStrip>
      <Toolbar>
        <ToolButton type="button" aria-label="Назад"><MdArrowBack /></ToolButton>
        <ToolButton type="button" aria-label="Вперёд"><MdArrowForward /></ToolButton>
        <ToolButton type="button" aria-label="Обновить"><MdRefresh /></ToolButton>
        <ToolButton type="button" aria-label="Домой"><MdOutlineHome /></ToolButton>
        <AddressBar>
          <MdLock size={13} />
          <Url aria-label="Адрес" defaultValue="https://forums.overclockers.ru/ucp.php?i=pm&mode=view&f=0&p=5473316" />
          <MdStarBorder size={18} color="#555" />
        </AddressBar>
        <ToolButton type="button" aria-label="Расширение">
          <svg width="16" height="16" fill="#c9c9c9">
            <rect width="16" height="16" fill="#ececec" />
            <path d="M2 3h1v1H2zM7 2h1v1H7zM13 5h1v1h-1zM9 9h1v1H9zM4 12h1v1H4zM11 13h1v1h-1zM3 8h1v1H3z" />
          </svg>
        </ToolButton>
        <ToolButton type="button" aria-label="Меню"><MdMoreVert /></ToolButton>
      </Toolbar>
      <Bookmarks>
        {bookmarks.map((b) => (
          <Bookmark href="#" key={b.t}>
            {b.icon}
            <BookmarkText $w={b.w} $cut={b.cut}>{b.t}</BookmarkText>
          </Bookmark>
        ))}
        <More type="button">»</More>
      </Bookmarks>

      <View>
        <Page>
          <Announce>
            <AnnounceSide $flip>АНОНСЫ</AnnounceSide>
            <AnnounceList>
              <AnnounceItem>
                <a href="#"><b>! МЕГАслив GTX 980 Ti ! Намного дешевле 1070! Никто не мог подумать! :)</b></a>
              </AnnounceItem>
              <AnnounceItem><a href="#">!!! Это шок, ШОК цена на крутой нереф GTX 980, смотри !!!</a></AnnounceItem>
              <AnnounceItem><a href="#">!!! GTX 980 по цене GTX 970, надо брать!</a></AnnounceItem>
              <AnnounceItem><a href="#">!!! <b>GTX 980 по цене 1060</b> успей купить!!!</a></AnnounceItem>
              <AnnounceItem><a href="#">! Еще один крутой нереф GTX 980 Ti за копейки</a></AnnounceItem>
              <AnnounceItem><a href="#">!!! GTX 980 за суперкопейки, смотри</a></AnnounceItem>
            </AnnounceList>
            <AnnounceSide>АНОНСЫ</AnnounceSide>
          </Announce>

          <QuickLinks>
            <span>
              <A href="#">Сообщения без ответов</A> | <A href="#">Активные темы</A>
            </span>
            <span>
              <A href="#">Непрочитанные сообщения</A> | <A href="#">Новые сообщения</A> | <A href="#">Ваши сообщения</A>
            </span>
          </QuickLinks>
          <CrumbBar />

          <Columns>
            <Stack>
              <Panel>
                <PanelHead>Настройки</PanelHead>
                <MenuList>
                  <MenuItem><A href="#">Обзор</A></MenuItem>
                  <MenuItem><A $teal href="#">Профиль</A></MenuItem>
                  <MenuItem><A href="#">Личные настройки</A></MenuItem>
                  <MenuItem $open>
                    <OpenTitle>Личные сообщения</OpenTitle>
                    <SubList>
                      <SubItem $current>» <A $teal href="#">Входящие</A></SubItem>
                      <SubItem>» <A $teal href="#">Исходящие (1)</A></SubItem>
                      <SubItem $rule>» <A $teal href="#">Отправленные</A></SubItem>
                      <SubItem>» <A $teal href="#">Новое сообщение</A></SubItem>
                      <SubItem>» <A href="#">Управление черновиками</A></SubItem>
                      <SubItem>» <A href="#">Правила, папки и настройки</A></SubItem>
                    </SubList>
                  </MenuItem>
                  <MenuItem><A href="#">Группы</A></MenuItem>
                  <MenuItem><A href="#">Друзья и недруги</A></MenuItem>
                  <MenuItem><A href="#">Галерея</A></MenuItem>
                </MenuList>
              </Panel>
              <Panel>
                <PanelHead>Друзья</PanelHead>
                <FriendsBody>
                  <Status $color="green">В сети</Status>
                  <StatusNote $rule>Нет друзей в сети</StatusNote>
                  <Status $color="red">Не в сети</Status>
                  <StatusNote>Нет друзей вне сети</StatusNote>
                </FriendsBody>
              </Panel>
            </Stack>

            <Stack>
              <NavBox>
                <A href="#">Предыдущее ЛС в архиве</A> | <A href="#">Следующее ЛС в архиве</A> |{" "}
                <A href="#">Предыдущее ЛС</A> | <A href="#">Следующее ЛС</A>
              </NavBox>
              <Details>
                <tbody>
                  <tr><th>Тема сообщения:</th><td>Re: Код Gears of war 4 (pc+xbox)</td></tr>
                  <tr><th>От:</th><td><Selected href="#">shazyk</Selected></td></tr>
                  <tr><th>Отправлено:</th><td>31.10.2016 19:29</td></tr>
                  <tr><th>Кому:</th><td><A $teal href="#">homa177</A></td></tr>
                </tbody>
              </Details>
              <Panel>
                <PanelHead>Сообщение</PanelHead>
                <Strip />
                <MessageBody>
                  <div>уже дал другому номер карты, завтра должен второй код появится, тебе его и отдам</div>
                  <PostTools>
                    <Dot />
                    <CloseButton type="button" aria-label="Удалить">
                      <CloseX size={8} color="#11689a" w={3} />
                    </CloseButton>
                  </PostTools>
                </MessageBody>
                <ButtonRow>
                  <ImageButton type="button" $w={83} $pad={19}>
                    <ProfileIcon />
                    профиль
                  </ImageButton>
                  <ButtonGroup>
                    <Quote />
                    <Reply />
                  </ButtonGroup>
                </ButtonRow>
                <MessageEnd />
              </Panel>
              <PrintBox>
                <A href="#">Для печати</A>
                <MoveForm>
                  <FolderSelect>
                    <select aria-label="Папка"><option>Входящие</option></select>
                  </FolderSelect>
                  <MoveButton type="button">Переместить в папку</MoveButton>
                </MoveForm>
              </PrintBox>
              <Panel>
                <PanelHead>История сообщений</PanelHead>
                <HistoryBox>
                  <HistoryView>
                    <History>
                      <colgroup>
                        <NameCol />
                        <col />
                      </colgroup>
                      <tbody>
                        <HistoryRow>
                          <td />
                          <td><Tail><Speck /></Tail></td>
                        </HistoryRow>
                        <FootRow />
                        <PostRow alt smile user="homa177" folder="Отправленные" sent="31.10.2016 18:28" text="На карте бабла нет просто.Завтра закину и оплачу со сбера." />
                        <FootRow alt />
                        <PostRow user="shazyk" folder="Входящие" sent="31.10.2016 18:26" text="окей, придержу" />
                        <FootRow reply />
                        <PostRow alt user="homa177" folder="Отправленные" text="Завтра можно оплатить?Точно заберу." />
                      </tbody>
                    </History>
                  </HistoryView>
                  <Scroll $w={17} aria-hidden>
                    <ScrollArrow />
                    <Gap $grow={80} />
                    <Thumb $grow={80} />
                    <Gap $grow={106} />
                    <ScrollArrow $down />
                  </Scroll>
                </HistoryBox>
              </Panel>
            </Stack>
          </Columns>

          <CrumbBar />
          <Credits>
            Создано на основе <A href="#">phpBB</A>® Forum Software © phpBB Group
            <br />
            <A href="#">Русская поддержка phpBB</A> | <A href="#">Kolobok smiles</A> © Aiwan
            <Counters>
              <Counter $kind="live" href="#">
                <LiveIcon />
                <LiveText>
                  <b>liveinternet</b>
                  <LiveNumber>413 081</LiveNumber>
                  <LiveNumber>102 810</LiveNumber>
                </LiveText>
              </Counter>
              <Counter $kind="rambler" href="#">
                <RamblerText>Рамблер<small>ТОП100</small></RamblerText>
                <BarsIcon />
              </Counter>
              <Counter $kind="stat" href="#">
                <StatArrow />
                <StatText>83 077<br />22 026<br />16 912</StatText>
                <StatIcons />
              </Counter>
            </Counters>
          </Credits>
        </Page>
        <PageScroll />
        <EdgeMark />
      </View>

      <TaskBar>
        <TaskGroup>
          <TaskButton type="button" aria-label="Пуск"><WindowsIcon /></TaskButton>
          <TaskButton type="button" aria-label="Поиск"><SearchIcon /></TaskButton>
          <TaskButton type="button" aria-label="Представление задач"><TaskViewIcon /></TaskButton>
        </TaskGroup>
        <TaskGroup $apps>
          {apps.map((a) => (
            <TaskButton type="button" key={a.name} aria-label={a.name} $state={a.state}>{a.icon}</TaskButton>
          ))}
        </TaskGroup>
        <Tray>
          {tray.map((t, i) => (
            <TrayItem type="button" key={i}>{t}</TrayItem>
          ))}
          <Lang type="button">РУС</Lang>
          <Clock>15:56<br />02.11.2016</Clock>
          <NoteButton type="button" aria-label="Уведомления">
            <T><path d="M1 1h14v11h-4l-3 3v-3H1z" fill="none" stroke="#fff" strokeWidth="1.200" /></T>
          </NoteButton>
          <ShowDesktop type="button" aria-label="Рабочий стол" />
        </Tray>
      </TaskBar>
    </Screen>
  );
}
